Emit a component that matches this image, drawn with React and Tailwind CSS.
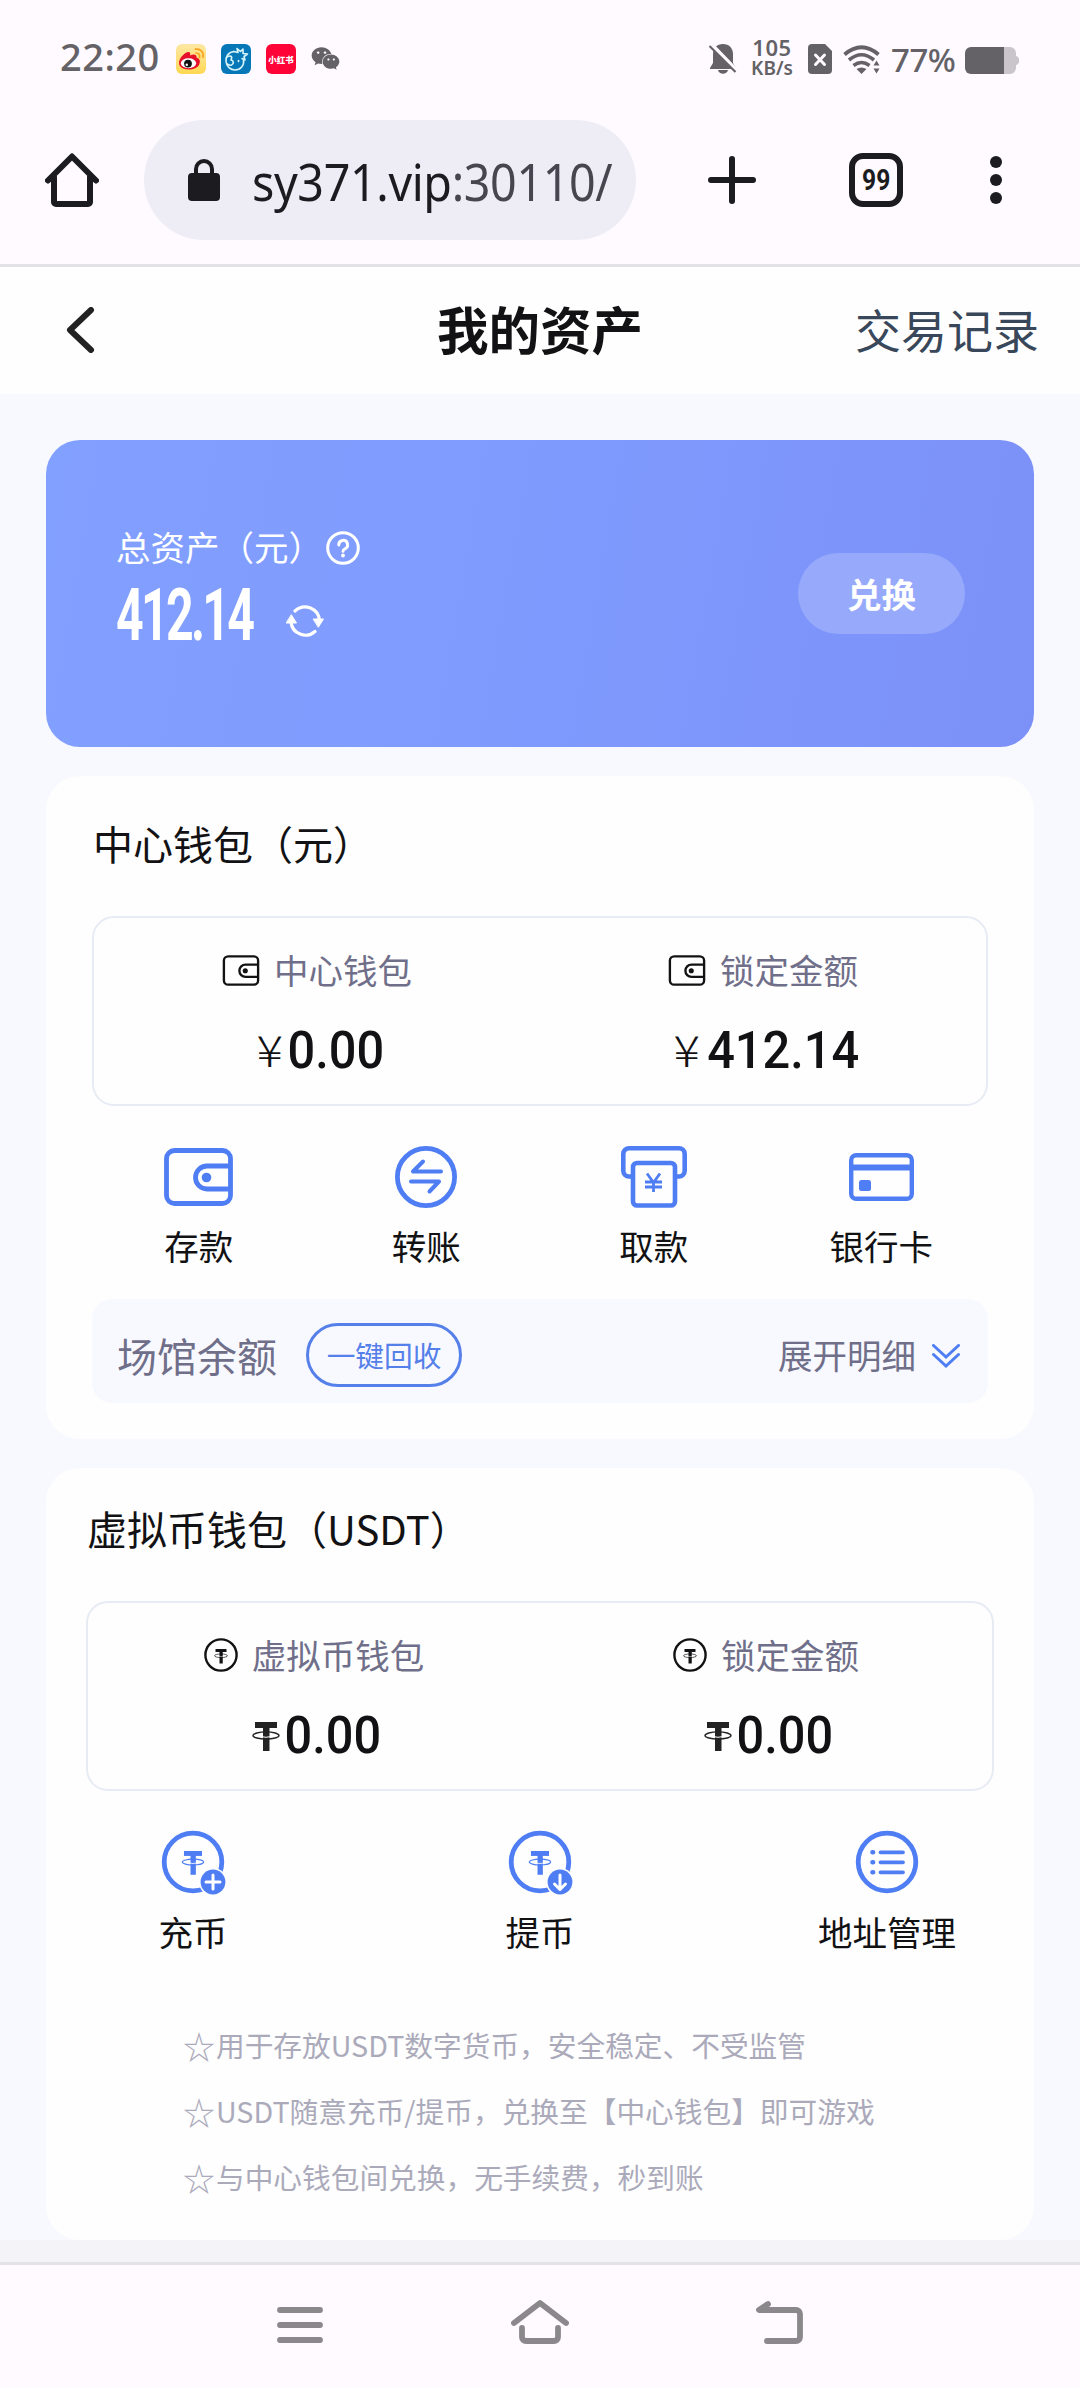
import { FaWeixin } from 'react-icons/fa';

const BLUE = '#4f7df3';

function WalletIcon({ className, stroke, color }) {
  return (
    <svg viewBox="0 0 69 58" fill="none" stroke={color} strokeWidth={stroke} className={className}>
      <rect x="2.5" y="2.5" width="64" height="53" rx="8" />
      <path d="M66 18H43a11 11 0 0 0 0 23h23" />
      <circle cx="42.5" cy="29.5" r="4.8" fill={color} stroke="none" />
    </svg>
  );
}

function TetherMark({ x = 0, y = 0, s = 1, color }) {
  return (
    <g transform={`translate(${x} ${y}) scale(${s})`}>
      <rect x="3" y="0" width="22" height="6" fill={color} />
      <rect x="11" y="4" width="6.5" height="25" fill={color} />
      <ellipse cx="14" cy="13.5" rx="13" ry="3.6" fill="none" stroke={color} strokeWidth="1.4" />
      <path d="M9 14.5q5 1.6 10 0" stroke="#fefefe" strokeWidth="1" fill="none" />
    </g>
  );
}

function TetherCircle() {
  return (
    <svg viewBox="0 0 34 34" className="size-[34px]">
      <circle cx="17" cy="17" r="15.6" fill="none" stroke="#121214" strokeWidth="2.4" />
      <TetherMark x={10} y={11} s={0.5} color="#121214" />
    </svg>
  );
}

function TransferIcon() {
  return (
    <svg viewBox="0 0 62 62" className="size-[62px]" fill="none" stroke={BLUE} strokeWidth="4.8">
      <circle cx="31" cy="31" r="28.6" />
      <path d="M46 25.5H18L28 15.5M16 35.5h28L34.5 45.5" strokeWidth="4" strokeLinecap="round" strokeLinejoin="round" />
    </svg>
  );
}

function WithdrawIcon() {
  return (
    <svg viewBox="0 0 66 62" className="h-[62px] w-[66px]" fill="none" stroke={BLUE} strokeWidth="4.6">
      <path d="M11 30.5H8a5.7 5.7 0 0 1-5.7-5.7V8A5.7 5.7 0 0 1 8 2.3h50A5.7 5.7 0 0 1 63.7 8v16.8a5.7 5.7 0 0 1-5.7 5.7h-3" />
      <rect x="12" y="17" width="42" height="42.5" rx="4" fill="#fefefe" />
      <path d="M26 27.5l6.5 9 6.5-9M32.5 36.5V46M24 36h17M24 41h17" strokeWidth="2.8" />
    </svg>
  );
}

function BankCardIcon() {
  return (
    <svg viewBox="0 0 65 48" className="h-[48px] w-[65px]" fill="none" stroke={BLUE} strokeWidth="4.4">
      <rect x="2.2" y="2.2" width="60.6" height="43.6" rx="5" />
      <path d="M2 14.5h61" strokeWidth="6" />
      <rect x="10" y="27" width="12" height="11" rx="2.5" fill={BLUE} stroke="none" />
    </svg>
  );
}

function CoinIcon({ children }) {
  return (
    <svg viewBox="0 0 66 66" className="size-[66px]" fill="none">
      <circle cx="33" cy="32" r="28.8" stroke={BLUE} strokeWidth="4.8" />
      <TetherMark x={21.5} y={21} s={0.82} color={BLUE} />
      <circle cx="53" cy="52" r="14" fill="#fefefe" />
      <circle cx="53" cy="52" r="12.4" fill={BLUE} />
      <g stroke="#fff" strokeWidth="3" strokeLinecap="round" strokeLinejoin="round">{children}</g>
    </svg>
  );
}

function ListIcon() {
  return (
    <svg viewBox="0 0 66 66" className="size-[66px]" fill="none" stroke={BLUE} strokeLinecap="round">
      <circle cx="33" cy="32" r="28.8" strokeWidth="4.8" />
      <path d="M26.5 22.3H49M26.5 32.3H49M26.5 42.3H49" strokeWidth="3.8" />
      <path d="M18.5 22.3h.6M18.5 32.3h.6M18.5 42.3h.6" strokeWidth="4.6" />
    </svg>
  );
}

const centerActions = [
  { label: '存款', icon: <WalletIcon className="h-[58px] w-[69px]" stroke={4.8} color={BLUE} /> },
  { label: '转账', icon: <TransferIcon /> },
  { label: '取款', icon: <WithdrawIcon /> },
  { label: '银行卡', icon: <BankCardIcon /> },
];

const coinActions = [
  { label: '充币', icon: <CoinIcon><path d="M46 52h14M53 45v14" /></CoinIcon> },
  { label: '提币', icon: <CoinIcon><path d="M53 45v14M47.5 54l5.5 5.5 5.5-5.5" /></CoinIcon> },
  { label: '地址管理', icon: <ListIcon /> },
];

const notes = [
  '用于存放USDT数字货币，安全稳定、不受监管',
  'USDT随意充币/提币，兑换至【中心钱包】即可游戏',
  '与中心钱包间兑换，无手续费，秒到账',
];

function StatusBar() {
  return (
    <div className="flex h-[120px] items-start pl-[60px] text-[#646266] font-['Noto_Sans']">
      <span className="mt-[30px] w-[116px] text-[38px] leading-[52px] font-medium tracking-[0.5px]">22:20</span>
      <div className="mt-[44px] flex gap-[15px]">
        <span className="size-[30px] overflow-hidden rounded-[6px] bg-linear-to-b from-[#fde7a2] to-[#ffd84f]">
          <svg viewBox="0 0 30 30" className="size-[30px]">
            <path d="M3 19c0-5 6-11 9.5-11 2 0 2 2 1.5 3.5 3-1.5 7-1.5 6.5 2 3 1 4 3 3 6-1 4-6 6-11 6-6 0-9.5-3-9.5-6.5z" fill="#e6102a" />
            <ellipse cx="12.5" cy="19.2" rx="7.6" ry="5" fill="#fff" />
            <circle cx="12" cy="19.6" r="3.9" fill="#111" />
            <circle cx="10.8" cy="20.8" r="1.2" fill="#fff" />
            <path d="M20 9c3 0 4 2 3.5 4.5M19.5 5.2c5-.8 8.5 3 7.5 8" fill="none" stroke="#f7a21d" strokeWidth="1.7" strokeLinecap="round" />
          </svg>
        </span>
        <svg viewBox="0 0 30 30" className="size-[30px]">
          <rect width="30" height="30" rx="6" fill="#0678b8" />
          <g fill="none" stroke="#d7f5fa" strokeWidth="1.6" strokeLinecap="round" strokeLinejoin="round">
            <path d="M13 7.5C7 8 4.5 13 5 17.5c.5 5 4.5 8.5 9 8.5 5.5 0 9.5-4.5 8.5-10" />
            <path d="M6 13c3-2 6-1 4 3 3 .5 3 4 .5 5-1.5.5-3 0-4.5-1" />
            <path d="M13 7.5l4 1-1-4 3.5 3L22 5v4.5l4.5.5-3.5 2.5 1 3.5-3-1.5" />
            <path d="M17.5 16.5v1" />
          </g>
        </svg>
        <span className="flex size-[30px] items-center justify-center rounded-[6px] bg-[#fe0437] text-[8.5px] leading-none font-black text-white font-['Noto_Sans_CJK_SC']">
          小红书
        </span>
        <FaWeixin className="size-[29px]" />
      </div>
      <div className="mr-[61px] ml-auto flex items-start">
        <svg viewBox="0 0 28 30" className="mt-[44px] h-[30px] w-[28px]" fill="#646266">
          <path d="M14 0c6 0 10 4 10 10v9l3 5v1H1v-1l3-5v-9C4 4 8 0 14 0zM9 26h10c-1 5-9 5-10 0z" />
          <path d="M2 0l26 27" stroke="#fefaff" strokeWidth="4" />
          <path d="M.5 2l26 26" stroke="#646266" strokeWidth="2.2" />
        </svg>
        <div className="mt-[37px] ml-[12px] flex w-[46px] flex-col items-center font-semibold">
          <span className="text-[22px] leading-[21px] tracking-[0.5px]">105</span>
          <span className="text-[19px] leading-[20px]">KB/s</span>
        </div>
        <svg viewBox="0 0 24 30" className="mt-[44px] ml-[13px] h-[30px] w-[24px]">
          <path d="M4 0h13l7 7v19a4 4 0 0 1-4 4H4a4 4 0 0 1-4-4V4a4 4 0 0 1 4-4z" fill="#646266" />
          <path d="M7.5 11l9 9.5M16.5 11l-9 9.5" stroke="#fefaff" strokeWidth="3" strokeLinecap="round" />
        </svg>
        <svg viewBox="0 0 38 30" className="mt-[45px] ml-[11px] h-[30px] w-[38px]" fill="none" stroke="#646266">
          <path d="M1.5 9.5q17-14.5 34 0" strokeWidth="3.8" />
          <path d="M6 15q12.5-10.5 25 0M10.5 20.5q8-6 16 0" strokeWidth="3.6" />
          <path d="M13.5 24q5-3 10 0l-5 5z" fill="#646266" stroke="none" />
          <path d="M30.5 20.5l3-5 3 5zM30.5 23.5l3 5 3-5z" fill="#646266" stroke="none" />
        </svg>
        <span className="mt-[38px] ml-[10px] w-[74px] text-[33px] leading-[44px] font-medium tracking-[-0.5px]">77%</span>
        <svg viewBox="0 0 54 27" className="mt-[47px] h-[27px] w-[54px]">
          <path d="M39 0h6a6 6 0 0 1 6 6v3a4 4 0 0 1 3 4v1a4 4 0 0 1-3 4v3a6 6 0 0 1-6 6h-6z" fill="#c9c5ca" />
          <path d="M6 0h33v27H6a6 6 0 0 1-6-6V6a6 6 0 0 1 6-6z" fill="#646266" />
        </svg>
      </div>
    </div>
  );
}

function BrowserBar() {
  return (
    <div className="flex h-[147px] items-start border-b-[3px] border-[#e3e2e7] pl-[45px]">
      <svg viewBox="0 0 54 54" className="mt-[33px] size-[54px]" fill="none" stroke="#1b1b20" strokeWidth="6" strokeLinejoin="round" strokeLinecap="round">
        <path d="M3 27.5L27 3.5l24 24M9 24v25a2 2 0 0 0 2 2h32a2 2 0 0 0 2-2V24" />
      </svg>
      <div className="ml-[45px] flex h-[120px] w-[492px] items-center rounded-full bg-[#eeedf6] pl-[44px]">
        <svg viewBox="0 0 32 42" className="h-[42px] w-[32px] shrink-0">
          <rect y="14" width="32" height="28" rx="4" fill="#1b1b20" />
          <path d="M8 16V10a8 8 0 0 1 16 0v6" fill="none" stroke="#1b1b20" strokeWidth="4" />
        </svg>
        <div className="mt-[1px] ml-[32px] shrink-0 origin-left scale-x-[0.914] text-[51px] leading-[70px] tracking-[-0.4px] whitespace-nowrap text-[#1b1b20] font-['Noto_Sans']">
          sy371.vip<span className="text-[#47464f]">:30110/</span>
        </div>
      </div>
      <svg viewBox="0 0 48 48" className="mt-[36px] ml-[72px] size-[48px]" stroke="#1b1b20" strokeWidth="6" strokeLinecap="round">
        <path d="M24 3v42M3 24h42" />
      </svg>
      <div className="mt-[33px] ml-[93px] flex size-[54px] items-center justify-center rounded-[14px] border-[6px] border-[#1b1b20]">
        <span className="scale-x-[0.82] text-[30px] leading-none font-bold text-[#1b1b20] font-['Roboto']">99</span>
      </div>
      <div className="mt-[36px] ml-[87px] flex flex-col gap-[6px]">
        <i className="size-[12px] rounded-full bg-[#1b1b20]" />
        <i className="size-[12px] rounded-full bg-[#1b1b20]" />
        <i className="size-[12px] rounded-full bg-[#1b1b20]" />
      </div>
    </div>
  );
}

function Balance({ icon, label, symbol, amount }) {
  return (
    <div className="flex flex-1 flex-col items-center">
      <div className="flex h-[50px] items-center gap-[14px] text-[34.5px] text-[#706f8a]">
        {icon}
        {label}
      </div>
      <div className="mt-[28px] flex h-[56px] items-center text-[#121214]">
        {symbol}
        <span className="origin-right scale-x-[0.955] text-[51px] leading-[56px] font-medium font-['Roboto']">{amount}</span>
      </div>
    </div>
  );
}

function Action({ icon, label, className }) {
  return (
    <div className={`flex flex-col items-center ${className}`}>
      <div className="flex h-[66px] items-center justify-center">{icon}</div>
      <span className="mt-[10px] text-[34.5px] leading-[50px] text-[#121214]">{label}</span>
    </div>
  );
}

export default function App() {
  const smallWallet = <WalletIcon className="h-[31px] w-[38px]" stroke={4.4} color="#121214" />;
  const yen = <span className="mb-[6px] w-[33px] origin-right scale-x-[1.15] text-right text-[43px] leading-[56px] font-light">¥</span>;
  const tether = (
    <svg viewBox="0 0 28 29" className="ml-[5px] h-[29px] w-[28px]">
      <TetherMark color="#222" />
    </svg>
  );

  return (
    <div className="h-[2388px] w-[1080px] overflow-hidden bg-[#fefaff] font-['Noto_Sans_CJK_SC',sans-serif]">
      <StatusBar />
      <BrowserBar />

      <header className="flex h-[127px] items-center bg-[#fefefe] pr-[41px] pb-[5px] pl-[66px]">
        <svg viewBox="0 0 28 46" className="mt-[4px] h-[46px] w-[159px] flex-none" preserveAspectRatio="xMinYMid" fill="none" stroke="#222" strokeWidth="6" strokeLinecap="round" strokeLinejoin="round">
          <path d="M25 3L4 23l21 20" />
        </svg>
        <h1 className="flex-1 text-center text-[51.5px] font-bold text-[#121214]">我的资产</h1>
        <span className="w-[184px] text-[46px] whitespace-nowrap text-[#39475a]">交易记录</span>
      </header>

      <main className="h-[1846px] bg-[#f8f9ff] px-[46px] pt-[46px]">
        <section className="flex h-[307px] justify-between rounded-[34px] bg-linear-[100deg,#82a0ff_0%,#7f9bfe_45%,#7c91f8_100%] pr-[69px] pl-[70px] text-white">
          <div className="pt-[82px]">
            <div className="flex h-[50px] items-center text-[34.5px]">
              总资产（元）
              <svg viewBox="0 0 34 34" className="mt-[2px] ml-[3px] size-[34px]" fill="none" stroke="#fff">
                <circle cx="17" cy="17" r="15.3" strokeWidth="3" />
                <path d="M12.8 14a4.4 4.4 0 1 1 6.2 3.8q-2 1-2 2.5" strokeWidth="3" strokeLinecap="round" />
                <circle cx="17" cy="24.5" r="1.9" fill="#fff" stroke="none" />
              </svg>
            </div>
            <div className="mt-[4px] flex h-[80px] items-center">
              <span className="w-[170px] origin-left scale-x-[0.67] text-[72px] leading-[80px] font-bold tracking-[-4px] font-['Roboto']">412.14</span>
              <svg viewBox="0 0 38 32" className="mt-[9px] h-[32px] w-[38px]" fill="none" stroke="#fff" strokeWidth="3.2" strokeLinecap="round">
                <path d="M9 6a14.5 14.5 0 0 1 24.5 10M29 26.5A14.5 14.5 0 0 1 5 17" />
                <path d="M27.5 14h10l-5 8zM.5 18h10l-5-8z" fill="#fff" stroke="#fff" strokeWidth="1" strokeLinejoin="round" />
              </svg>
            </div>
          </div>
          <button className="mt-[113px] h-[81px] w-[167px] rounded-full bg-[#96a9fb] text-[34.5px] font-bold">兑换</button>
        </section>

        <section className="mt-[29px] h-[663px] rounded-[34px] bg-[#fefefe] px-[46px] pt-[37px]">
          <h2 className="h-[60px] pl-[1px] text-[40px] leading-[60px] text-[#121214]">中心钱包（元）</h2>
          <div className="mt-[43px] flex h-[190px] rounded-[22px] border-2 border-[#e6ebf4] pt-[27px]">
            <Balance icon={smallWallet} label="中心钱包" symbol={yen} amount="0.00" />
            <Balance icon={smallWallet} label="锁定金额" symbol={yen} amount="412.14" />
          </div>
          <div className="mx-[-7px] mt-[38px] flex">
            {centerActions.map((a) => (
              <Action key={a.label} {...a} className="flex-1" />
            ))}
          </div>
          <div className="mt-[29px] flex h-[104px] items-center rounded-[20px] bg-[#f8f9ff] pt-[8px] pr-[28px] pl-[25px] text-[#706f8a]">
            <span className="text-[40px]">场馆余额</span>
            <button className="ml-[29px] h-[64px] w-[156px] rounded-full border-[3px] border-[#5580ea] text-[28.7px] leading-[50px] whitespace-nowrap text-[#5580ea]">一键回收</button>
            <span className="ml-auto text-[34.5px]">展开明细</span>
            <svg viewBox="0 0 28 24" className="mt-[2px] ml-[16px] h-[24px] w-[28px]" fill="none" stroke={BLUE} strokeWidth="3" strokeLinecap="round">
              <path d="M1.5 1.5L14 13 26.5 1.5M1.5 10.5L14 22 26.5 10.5" />
            </svg>
          </div>
        </section>

        <section className="mt-[29px] h-[772px] rounded-[34px] bg-[#fefefe] px-[40px] pt-[30px]">
          <h2 className="h-[60px] pl-[1px] text-[40px] leading-[60px] text-[#121214]">虚拟币钱包（USDT）</h2>
          <div className="mt-[43px] flex h-[190px] rounded-[22px] border-2 border-[#e6ebf4] pt-[27px]">
            <Balance icon={<TetherCircle />} label="虚拟币钱包" symbol={tether} amount="0.00" />
            <Balance icon={<TetherCircle />} label="锁定金额" symbol={tether} amount="0.00" />
          </div>
          <div className="mt-[39px] flex justify-between">
            {coinActions.map((a) => (
              <Action key={a.label} {...a} className="w-[214px]" />
            ))}
          </div>
          <ul className="mt-[56px] pl-[97px] text-[28.7px] leading-[66px] text-[#abaabb]">
            {notes.map((note) => (
              <li key={note} className="flex h-[66px] whitespace-nowrap">
                <span className="w-[33px] text-[32px]">☆</span>
                {note}
              </li>
            ))}
          </ul>
        </section>
      </main>
      <div className="h-[22px] bg-[#f3f3f8]" />

      <nav className="flex h-[126px] items-start border-t-[3px] border-[#e3e2e7] bg-[#fefaff] pl-[277px]">
        <svg viewBox="0 0 46 36" className="mt-[42px] h-[36px] w-[46px]" stroke="#8a888b" strokeWidth="5.8" strokeLinecap="round">
          <path d="M3 3h40M3 18h40M3 33h40" />
        </svg>
        <svg viewBox="0 0 58 44" className="mt-[35px] ml-[188px] h-[44px] w-[58px]" fill="none" stroke="#8a888b" strokeWidth="5.8" strokeLinecap="round" strokeLinejoin="round">
          <path d="M3 23L29 3l26 20M11 28v9a4 4 0 0 0 4 4h28a4 4 0 0 0 4-4v-9" />
        </svg>
        <svg viewBox="0 0 48 44" className="mt-[35px] ml-[186px] h-[44px] w-[48px]" fill="none" stroke="#8a888b" strokeWidth="5.8" strokeLinecap="round" strokeLinejoin="round">
          <path d="M13 4L4 10h37a4 4 0 0 1 4 4v23a4 4 0 0 1-4 4H12" />
        </svg>
      </nav>
    </div>
  );
}
